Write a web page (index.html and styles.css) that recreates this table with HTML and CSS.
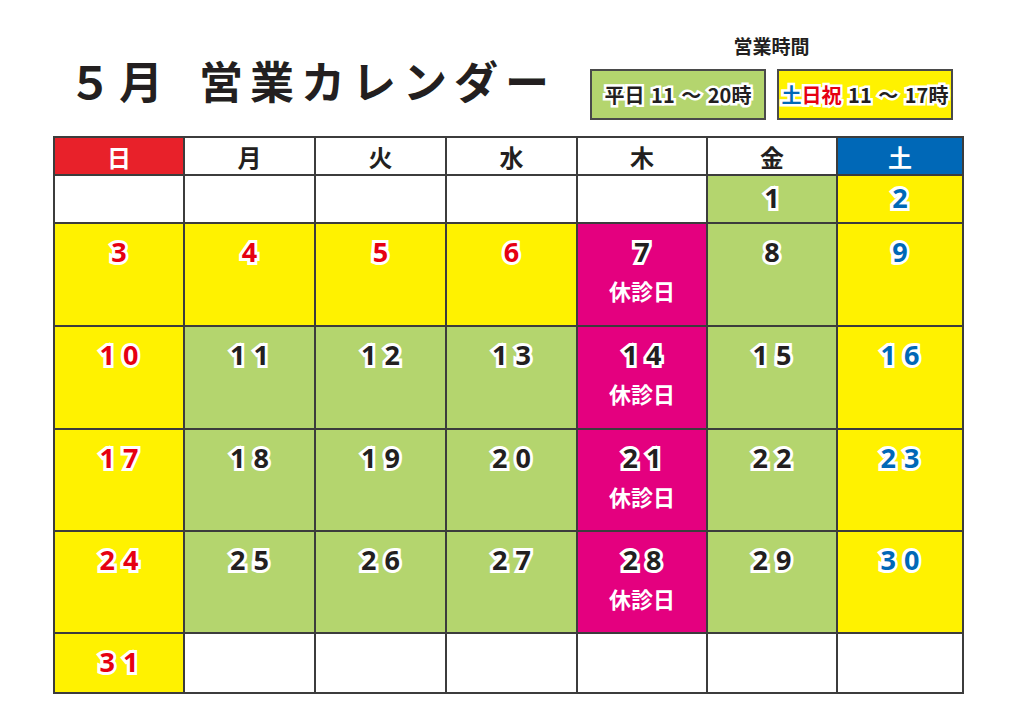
FILE: index.html
```html
<!DOCTYPE html>
<html lang="ja">
<head>
<meta charset="utf-8">
<title>5月 営業カレンダー</title>
<link rel="stylesheet" href="styles.css">
</head>
<body>
<div class="page">
  <header class="top">
    <h1 class="title"><span class="month">５月</span><span class="name">営業カレンダー</span></h1>
    <div class="legend">
      <div class="legend-label">営業時間</div>
      <div class="legend-boxes">
        <div class="lbox lbox-green"><span class="ol">平日 11 ～ 20時</span></div>
        <div class="lbox lbox-yellow"><span class="ol"><span class="c-blue">土</span><span class="c-red">日祝</span> 11 ～ 17時</span></div>
      </div>
    </div>
  </header>

  <div class="cal">
    <div class="hd hd-sun">日</div>
    <div class="hd">月</div>
    <div class="hd">火</div>
    <div class="hd">水</div>
    <div class="hd">木</div>
    <div class="hd">金</div>
    <div class="hd hd-sat">土</div>

    <div class="cell empty"></div>
    <div class="cell empty"></div>
    <div class="cell empty"></div>
    <div class="cell empty"></div>
    <div class="cell empty"></div>
    <div class="cell green first"><span class="num">1</span></div>
    <div class="cell yellow first"><span class="num blue">2</span></div>

    <div class="cell yellow"><span class="num red">3</span></div>
    <div class="cell yellow"><span class="num red">4</span></div>
    <div class="cell yellow"><span class="num red">5</span></div>
    <div class="cell yellow"><span class="num red">6</span></div>
    <div class="cell pink"><span class="num">7</span><span class="closed">休診日</span></div>
    <div class="cell green"><span class="num">8</span></div>
    <div class="cell yellow"><span class="num blue">9</span></div>

    <div class="cell yellow"><span class="num red">10</span></div>
    <div class="cell green"><span class="num">11</span></div>
    <div class="cell green"><span class="num">12</span></div>
    <div class="cell green"><span class="num">13</span></div>
    <div class="cell pink"><span class="num">14</span><span class="closed">休診日</span></div>
    <div class="cell green"><span class="num">15</span></div>
    <div class="cell yellow"><span class="num blue">16</span></div>

    <div class="cell yellow"><span class="num red">17</span></div>
    <div class="cell green"><span class="num">18</span></div>
    <div class="cell green"><span class="num">19</span></div>
    <div class="cell green"><span class="num">20</span></div>
    <div class="cell pink"><span class="num">21</span><span class="closed">休診日</span></div>
    <div class="cell green"><span class="num">22</span></div>
    <div class="cell yellow"><span class="num blue">23</span></div>

    <div class="cell yellow"><span class="num red">24</span></div>
    <div class="cell green"><span class="num">25</span></div>
    <div class="cell green"><span class="num">26</span></div>
    <div class="cell green"><span class="num">27</span></div>
    <div class="cell pink"><span class="num">28</span><span class="closed">休診日</span></div>
    <div class="cell green"><span class="num">29</span></div>
    <div class="cell yellow"><span class="num blue">30</span></div>

    <div class="cell yellow"><span class="num red">31</span></div>
    <div class="cell empty"></div>
    <div class="cell empty"></div>
    <div class="cell empty"></div>
    <div class="cell empty"></div>
    <div class="cell empty"></div>
    <div class="cell empty"></div>
  </div>
</div>
</body>
</html>
```

FILE: styles.css
```css
html, body {
  margin: 0;
  padding: 0;
  background: #ffffff;
}

body {
  font-family: "Noto Sans CJK JP", "Noto Sans", sans-serif;
  color: #231f20;
  width: 1024px;
  height: 724px;
  overflow: hidden;
}

.page {
  width: 1024px;
}

.top {
  display: flex;
  align-items: flex-start;
  height: 136px;
}

.title {
  margin: 58px 0 0 68px;
  font-size: 44px;
  line-height: 44px;
  font-weight: 700;
  letter-spacing: 7px;
  display: flex;
  gap: 29px;
  color: #231f20;
}

.legend {
  margin: 34px 71px 0 auto;
  display: flex;
  flex-direction: column;
  align-items: center;
}

.legend-label {
  font-size: 19px;
  line-height: 24px;
  font-weight: 700;
  color: #231f20;
}

.legend-boxes {
  display: flex;
  gap: 11px;
  margin-top: 11px;
}

.lbox {
  width: 172px;
  height: 47px;
  border: 2px solid #4a4a4a;
  display: flex;
  align-items: center;
  justify-content: center;
  font-size: 20px;
  font-weight: 700;
  color: #231f20;
}

.lbox-green { background: #b4d56e; }
.lbox-yellow { background: #fff200; }

.ol {
  -webkit-text-stroke: 5px #ffffff;
  paint-order: stroke fill;
  white-space: pre;
  letter-spacing: 0;
  word-spacing: 2px;
}

.c-blue { color: #0068b7; }
.c-red { color: #e60012; }

.cal {
  margin-left: 53px;
  width: 907px;
  display: grid;
  grid-template-columns: 128px 129px 129px 129px 128px 128px 124px;
  grid-template-rows: 36px 46px 101px 101px 100px 100px 58px;
  gap: 2px;
  background: #3c3c3c;
  border: 2px solid #3c3c3c;
}

.hd {
  background: #ffffff;
  display: flex;
  align-items: center;
  justify-content: center;
  font-size: 24px;
  font-weight: 700;
  color: #231f20;
}

.hd-sun { background: #e8212a; color: #ffffff; }
.hd-sat { background: #0068b7; color: #ffffff; }

.cell {
  display: flex;
  flex-direction: column;
  align-items: center;
  padding-top: 11px;
  background: #ffffff;
}

.cell.first { padding-top: 5px; }

.green { background: #b4d56e; }
.yellow { background: #fff200; }
.pink { background: #e4007f; }

.num {
  font-family: "Noto Sans", "DejaVu Sans", sans-serif;
  font-size: 27px;
  line-height: 34px;
  font-weight: 700;
  letter-spacing: 8px;
  padding-left: 8px;
  color: #231f20;
  -webkit-text-stroke: 6px #ffffff;
  paint-order: stroke fill;
}

.num.red { color: #e60012; }
.num.blue { color: #0068b7; }

.closed {
  margin-top: 7px;
  font-size: 22px;
  line-height: 28px;
  font-weight: 700;
  color: #ffffff;
}
```
